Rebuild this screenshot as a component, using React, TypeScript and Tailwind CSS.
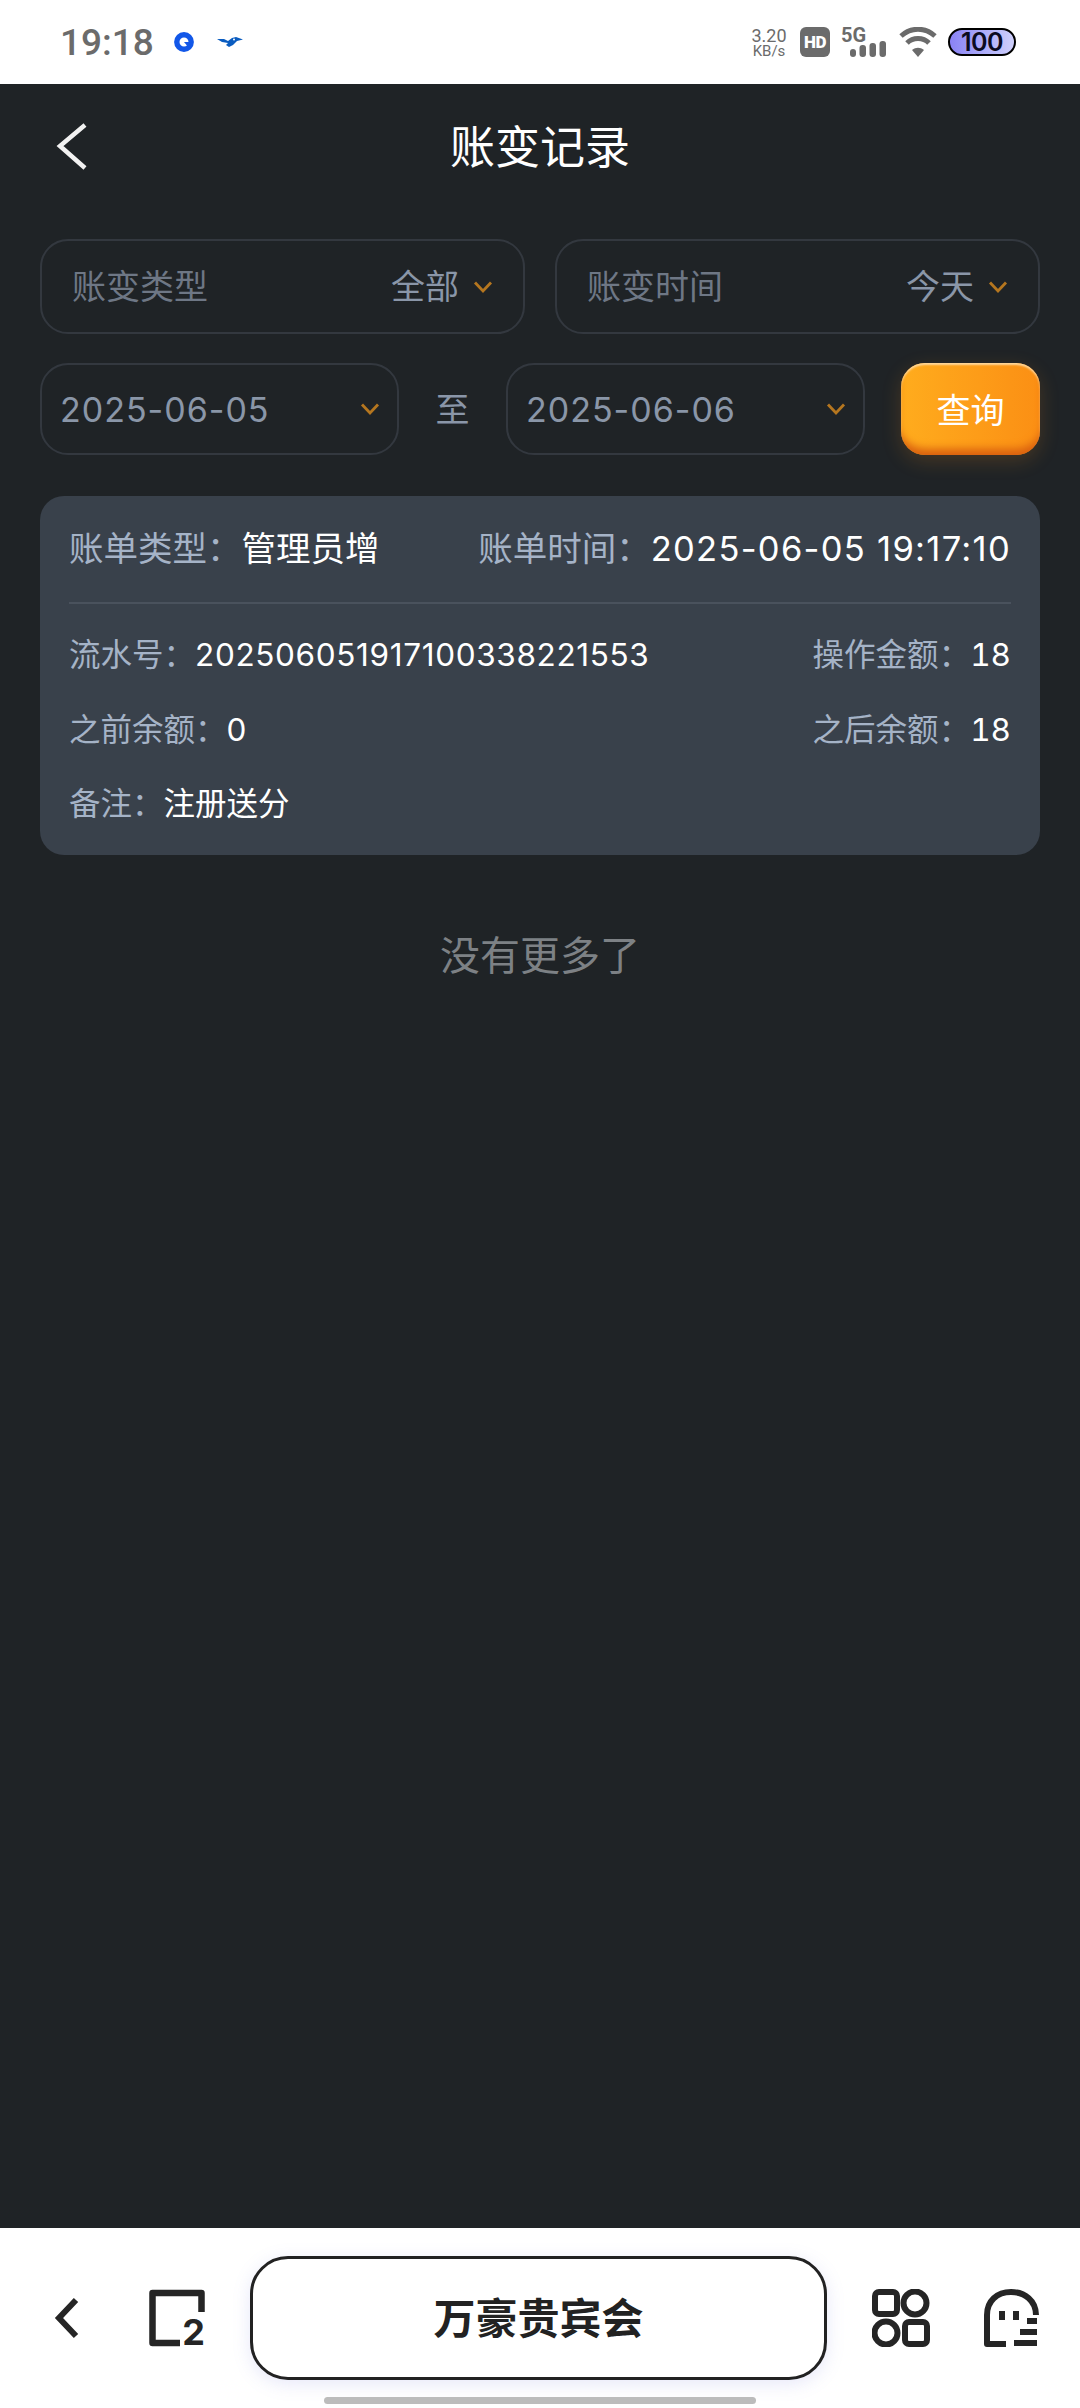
import React from 'react';

const Chevron: React.FC<{ className?: string }> = ({ className }) => (
  <svg className={className} width="20" height="14" viewBox="0 0 20 14" fill="none">
    <path d="M2 2.5 L10 11 L18 2.5" stroke="#b5761f" strokeWidth="2.8" />
  </svg>
);

const StatusBar: React.FC = () => (
  <div className="flex h-[84px] items-center bg-white pl-[60px] pr-[64px] font-['Roboto','Noto_Sans_CJK_SC',sans-serif]">
    <span className="text-[37px] font-medium text-[#6b6b6b] leading-none">19:18</span>
    <svg className="ml-[20px]" width="20" height="20" viewBox="0 0 20 20">
      <circle cx="10" cy="10" r="7.2" fill="none" stroke="#1257e8" strokeWidth="5.4" />
      <path d="M10 10 L17 10 L15 16 Z" fill="#1257e8" />
    </svg>
    <svg className="ml-[23px]" width="26" height="12" viewBox="0 0 26 12">
      <path d="M0 3 L7 3 L11 5 L15 2 L19 1 L26 3.5 L20 5 L16 9 L12 11 L9 9 L11 7 L5 6 Z" fill="#0a5cc0" />
      <circle cx="17" cy="3.6" r="1" fill="#fff" />
    </svg>
    <div className="flex-1" />
    <div className="flex w-[40px] flex-col items-center text-[#6b6b6b]">
      <span className="text-[18px] leading-[17px]">3.20</span>
      <span className="text-[15px] leading-[14px]">KB/s</span>
    </div>
    <div className="ml-[11px] flex h-[30px] w-[30px] items-center justify-center rounded-[6px] bg-[#6b6b6b]">
      <span className="text-[17px] font-black leading-none tracking-[-0.5px] text-white">HD</span>
    </div>
    <div className="relative ml-[11px] h-[32px] w-[46px]">
      <span className="absolute left-0 top-0 text-[20px] font-bold leading-[18px] text-[#6b6b6b]">5G</span>
      <svg width="46" height="32" viewBox="0 0 46 32">
        <rect x="9" y="23" width="6" height="8" rx="3" fill="#6b6b6b" />
        <rect x="18.5" y="19" width="6.5" height="12" rx="3" fill="#6b6b6b" />
        <rect x="28.5" y="17" width="6.5" height="14" rx="3" fill="#6b6b6b" />
        <rect x="38.5" y="15" width="6.5" height="16" rx="3" fill="#6b6b6b" />
      </svg>
    </div>
    <svg className="ml-[12px]" width="38" height="30" viewBox="0 0 38 30" fill="none">
      <path d="M2 9 C12 0 26 0 36 9" stroke="#6b6b6b" strokeWidth="5" />
      <path d="M8 16 C14 10 24 10 30 16" stroke="#6b6b6b" strokeWidth="5" />
      <path d="M13 23 L19 30 L25 23 C21 20 17 20 13 23 Z" fill="#6b6b6b" />
    </svg>
    <div className="ml-[11px] flex h-[28px] w-[68px] items-center justify-center rounded-full border-[2px] border-black bg-gradient-to-r from-[#8a82f5] to-[#cfd0fb]">
      <span className="font-['Inter'] text-[25px] font-semibold leading-none tracking-[-0.5px] text-[#0b0b20]">100</span>
    </div>
  </div>
);

const FilterBox: React.FC<{ label: string; value: string }> = ({ label, value }) => (
  <div className="flex h-[95px] flex-1 items-center rounded-[28px] border-2 border-[#33383f] px-[30px]">
    <span className="text-[34px] text-[#6e7785]">{label}</span>
    <span className="ml-auto text-[34px] text-[#8a96a8]">{value}</span>
    <Chevron className="ml-[14px]" />
  </div>
);

const DateBox: React.FC<{ value: string }> = ({ value }) => (
  <div className="flex h-[92px] w-[359px] items-center justify-between rounded-[28px] border-2 border-[#33383f] pl-[18px] pr-[17px]">
    <span className="text-[34px] tracking-[1px] text-[#8a96a8]">{value}</span>
    <Chevron />
  </div>
);

const Field: React.FC<{ label: string; value: string; size?: string; valueClass?: string }> = ({
  label,
  value,
  size = 'text-[31.5px]',
  valueClass = '',
}) => (
  <div className={`flex items-center whitespace-nowrap ${size}`}>
    <span className="text-[#a5b3c7]">{label}：</span>
    <span className={`text-white ${valueClass}`}>{value}</span>
  </div>
);

const BottomBar: React.FC = () => (
  <div className="flex h-[180px] flex-col items-center bg-white">
    <div className="mt-[28px] flex w-full items-center pl-[54px]">
      <svg width="26" height="42" viewBox="0 0 26 42" fill="none">
        <path d="M22 3 L5 21 L22 39" stroke="#252525" strokeWidth="6" />
      </svg>
      <div className="relative ml-[69px] h-[58px] w-[56px]">
        <svg width="56" height="58" viewBox="0 0 56 58" fill="none">
          <path d="M31 54 H3.5 V4 H52.5 V23" stroke="#252525" strokeWidth="6.5" strokeLinejoin="round" />
        </svg>
        <span className="absolute bottom-0 right-0 text-[36px] font-bold leading-[30px] text-[#252525]">2</span>
      </div>
      <div className="ml-[45px] flex h-[124px] w-[577px] items-center justify-center rounded-[38px] border-[3px] border-[#222] bg-white shadow-[0_4px_18px_rgba(120,130,220,0.18)]">
        <span className="text-[42px] font-bold text-[#222]">万豪贵宾会</span>
      </div>
      <svg className="ml-[45px]" width="58" height="58" viewBox="0 0 58 58" fill="none" stroke="#252525" strokeWidth="6">
        <rect x="3" y="3" width="22" height="22" rx="4" />
        <circle cx="43" cy="14" r="11.5" />
        <circle cx="14" cy="44" r="11.5" />
        <rect x="33" y="33" width="22" height="22" rx="4" />
      </svg>
      <svg className="ml-[53px]" width="56" height="58" viewBox="0 0 56 58" fill="none" stroke="#252525" strokeWidth="6">
        <path d="M23 55 H4 V26 C4 12 14 3 28 3 C42 3 53 12 53 26" strokeLinejoin="round" />
        <path d="M19 22 V31 M33 22 V31" />
        <path d="M44 32 H54 M37 43 H54 M31 54 H54" />
      </svg>
    </div>
    <div className="mt-[17px] h-[7px] w-[432px] rounded-full bg-[#bcbcbc]" />
  </div>
);

export default function App() {
  return (
    <div className="flex h-[2408px] w-[1080px] flex-col overflow-hidden bg-[#1f2326] font-['Inter','Noto_Sans_CJK_SC',sans-serif]">
      <StatusBar />

      <div className="relative flex h-[84px] items-center justify-center">
        <svg className="absolute left-[56px] top-[38px]" width="32" height="48" viewBox="0 0 32 48" fill="none">
          <path d="M29 3 L4 24 L29 46" stroke="#f2f2f2" strokeWidth="4.5" />
        </svg>
        <span className="mt-[42px] text-[45px] text-white leading-none">账变记录</span>
      </div>

      <div className="mt-[71px] flex gap-[30px] px-[40px]">
        <FilterBox label="账变类型" value="全部" />
        <FilterBox label="账变时间" value="今天" />
      </div>

      <div className="mt-[29px] flex items-center px-[40px]">
        <DateBox value="2025-06-05" />
        <span className="flex-1 text-center text-[34px] text-[#8a96a8]">至</span>
        <DateBox value="2025-06-06" />
        <button className="ml-[36px] h-[92px] w-[139px] rounded-[24px] bg-gradient-to-r from-[#ffac1d] to-[#fb8f14] pt-[2px] text-[34px] text-white shadow-[inset_0_-10px_8px_-4px_#d9600f,inset_0_2px_2px_#ffd79a,0_6px_20px_rgba(255,150,30,0.18)]">
          查询
        </button>
      </div>

      <div className="mx-[40px] mt-[41px] flex h-[359px] flex-col rounded-[24px] bg-[#39414b] px-[29px]">
        <div className="flex h-[108px] items-center justify-between border-b-2 border-[#4a525d]">
          <Field label="账单类型" value="管理员增" size="text-[34.5px]" />
          <Field label="账单时间" value="2025-06-05 19:17:10" size="text-[34.5px]" valueClass="tracking-[1.3px]" />
        </div>
        <div className="mt-[14px] flex h-[74px] items-center justify-between">
          <Field label="流水号" value="202506051917100338221553" valueClass="tracking-[0.65px]" />
          <Field label="操作金额" value="18" valueClass="tabular-nums" />
        </div>
        <div className="flex h-[75px] items-center justify-between">
          <Field label="之前余额" value="0" />
          <Field label="之后余额" value="18" valueClass="tabular-nums" />
        </div>
        <div className="flex h-[74px] items-center">
          <Field label="备注" value="注册送分" />
        </div>
      </div>

      <div className="mt-[70px] text-center text-[40px] leading-[62px] text-[#7d8185]">没有更多了</div>

      <div className="flex-1" />
      <BottomBar />
    </div>
  );
}
